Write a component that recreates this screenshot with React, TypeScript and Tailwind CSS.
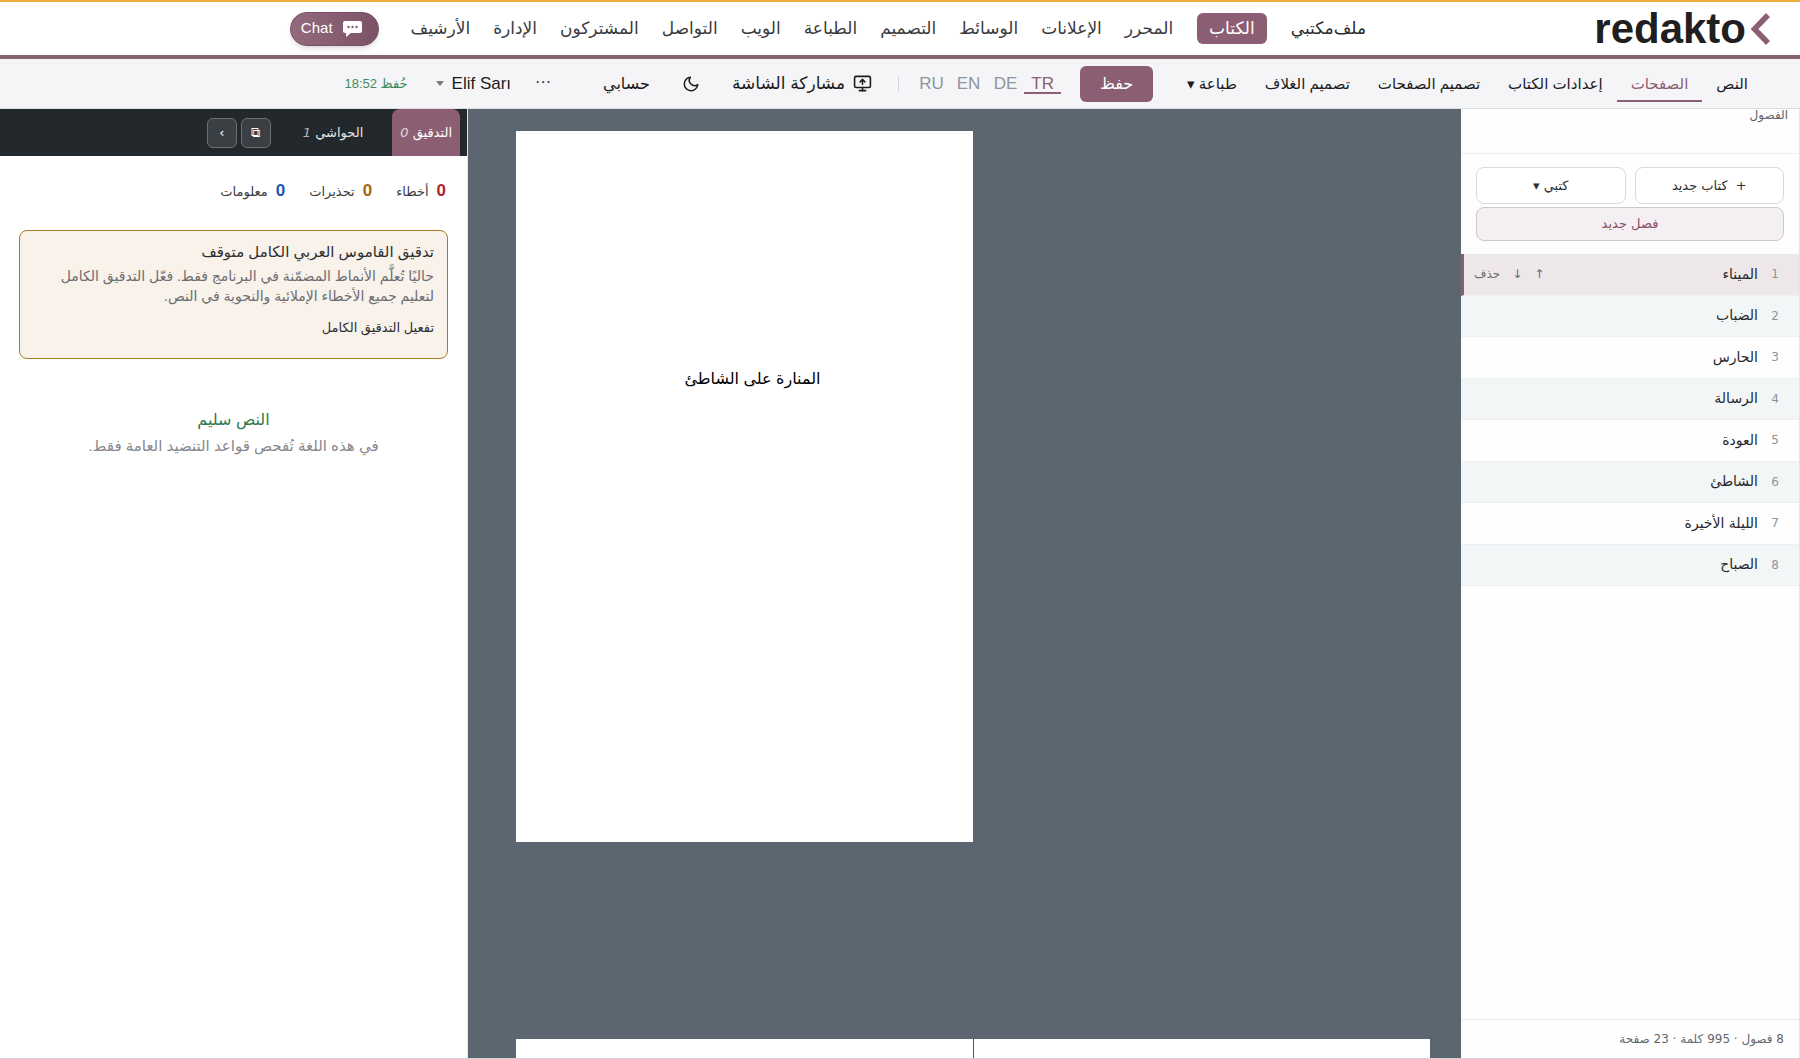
import React from 'react';
import { MonitorUp } from 'lucide-react';

const sections = ['المحرر', 'الإعلانات', 'الوسائط', 'التصميم', 'الطباعة', 'الويب', 'التواصل', 'المشتركون', 'الإدارة', 'الأرشيف'];
const bookTabs = ['النص', 'الصفحات', 'إعدادات الكتاب', 'تصميم الصفحات', 'تصميم الغلاف', 'طباعة ▾'];
const languages = ['TR', 'DE', 'EN', 'RU'];
const chapters = ['الميناء', 'الضباب', 'الحارس', 'الرسالة', 'العودة', 'الشاطئ', 'الليلة الأخيرة', 'الصباح'];

const counters = [
    { label: 'أخطاء', count: 0, color: 'text-[#b3262e]' },
    { label: 'تحذيرات', count: 0, color: 'text-[#a8660a]' },
    { label: 'معلومات', count: 0, color: 'text-[#1f56b3]' },
];

const Logo: React.FC = () => (
    <a href="#" className="flex items-center gap-1 text-[#1f1f1f]">
        <svg className="h-8 w-5" viewBox="0 0 20 32" fill="none" stroke="#8b5e73" strokeWidth="5.5">
            <path d="M18 2 4.500 16 18 30" />
        </svg>
        <span className="text-[42px] leading-12 font-bold">redakto</span>
    </a>
);

const Header: React.FC = () => (
    <header className="flex h-[59px] shrink-0 items-center border-t-2 border-b-4 border-t-[#ebaf37] border-b-[#86636f] bg-white ps-[30px]">
        <div className="w-[404px]"><Logo /></div>
        <nav className="flex items-center text-[17px] text-[#3a3a3d]">
            <a href="#" className="text-[#2b2b2e]">ملف</a>
            <a href="#" className="pe-6 text-[#2b2b2e]">مكتبي</a>
            <a href="#" className="me-6 rounded-md bg-[#8b5e73] px-3 py-[3px] text-white">الكتاب</a>
            <div className="flex gap-[23px]">
                {sections.map(name => (
                    <a key={name} href="#">{name}</a>
                ))}
            </div>
        </nav>
        <button className="ms-8 flex h-[34px] items-center gap-2.5 rounded-full border border-[#7b5065] bg-linear-to-r from-[#936a7d] to-[#7c5267] ps-4 pe-2.5 text-[15px] text-white shadow-md">
            <svg className="h-4 w-[19px]" viewBox="0 0 19 16" fill="white">
                <path d="M2 0h15a2 2 0 0 1 2 2v8a2 2 0 0 1-2 2H8l-5 4v-4H2a2 2 0 0 1-2-2V2a2 2 0 0 1 2-2z" />
                <g fill="#845a6e">
                    <circle cx="5.500" cy="6" r="1.200" />
                    <circle cx="9.500" cy="6" r="1.200" />
                    <circle cx="13.500" cy="6" r="1.200" />
                </g>
            </svg>
            Chat
        </button>
    </header>
);

const Toolbar: React.FC = () => (
    <div className="flex h-[50px] shrink-0 items-center border-b border-[#dcdfe2] bg-[#f5f5f7] ps-[38px] text-[#1b1b1e]">
        <nav className="flex items-center text-[15px] leading-6">
            {bookTabs.map(tab => (
                <a
                    key={tab}
                    href="#"
                    className={`border-b-2 px-3.5 pt-1.5 pb-1 ${tab === 'الصفحات' ? 'border-[#8b5e73] text-[#8b5e73]' : 'border-transparent'}`}
                >
                    {tab}
                </a>
            ))}
        </nav>
        <button className="ms-5 h-9 w-[73px] rounded-md bg-[#8b5e73] text-[16px] text-white">حفظ</button>
        <div className="ms-[19px] flex items-center text-[17px] text-[#8d959e]">
            {languages.map(code => (
                <button key={code} className={`w-[37px] border-y-2 border-t-transparent leading-4 ${code === 'TR' ? 'border-b-[#8b5e73] text-[#8b5e73]' : 'border-b-transparent'}`}>
                    {code}
                </button>
            ))}
        </div>
        <div className="mx-3.5 h-4 w-px bg-[#d3d5da]" />
        <button className="ms-3 flex items-center gap-2 text-[17px]">
            <MonitorUp size={19} />
            مشاركة الشاشة
        </button>
        <button className="ms-8" aria-label="الوضع الداكن">
            <svg className="h-[18px] w-[18px]" viewBox="0 0 24 24" fill="none" stroke="currentColor" strokeWidth="2" strokeLinejoin="round">
                <path d="M21 12.790A9 9 0 1 1 11.210 3 7 7 0 0 0 21 12.790z" />
            </svg>
        </button>
        <button className="ms-8 text-[16px]">حسابي</button>
        <button className="ms-[52px] pb-1 text-[16px]">···</button>
        <button className="ms-6 flex items-center gap-2 text-[17px]">
            Elif Sarı
            <svg className="h-[5px] w-2" viewBox="0 0 8 5" fill="#777"><path d="M0 0h8L4 5z" /></svg>
        </button>
        <span className="ms-7 text-[13px] text-[#3f8a5f]">حُفظ 18:52</span>
    </div>
);

const ChapterList: React.FC = () => (
    <aside className="flex w-[339px] shrink-0 flex-col border-s border-[#e3e5e8] bg-[#fefefe] font-['DejaVu_Sans',sans-serif]">
        <h2 className="h-[45px] border-b border-[#eceef0] px-[11px] text-[12px] leading-3 text-[#5f6368]">الفصول</h2>
        <div className="px-[15px] py-[13px] text-[13px]">
            <div className="grid grid-cols-2 gap-[9px]">
                <button className="flex h-[37px] items-center justify-center gap-2 rounded-lg border border-[#d9dade] bg-white text-[#2f2f33]"><span>+</span>كتاب جديد</button>
                <button className="h-[37px] rounded-lg border border-[#d9dade] bg-white text-[#2f2f33]">كتبي ▾</button>
            </div>
            <button className="mt-[3px] h-[34px] w-full rounded-lg border border-[#d0c6cc] bg-[#f4eff2] text-[#8b5068]">فصل جديد</button>
        </div>
        <ul className="grid h-[332px] auto-rows-fr">
            {chapters.map((title, i) => (
                <li
                    key={title}
                    className={`flex items-center border-b border-[#edf0f2] ps-5 ${i === 0 ? 'border-e-3 border-e-[#8b5e73] bg-[#eee7ea] pe-2.5' : i % 2 ? 'bg-[#f3f6f7]' : ''}`}
                >
                    <span className="w-[21px] text-[12px] text-[#8f9499]">{i + 1}</span>
                    <a href="#" className="grow text-[14px] text-[#26282b]">{title}</a>
                    {i === 0 && (
                        <span className="flex items-center gap-3 text-[12px] text-[#6c6a70]">
                            <button>↑</button>
                            <button>↓</button>
                            <button>حذف</button>
                        </span>
                    )}
                </li>
            ))}
        </ul>
        <footer className="mt-auto h-[39px] border-t border-[#e8eaec] px-[15px] pt-2.5 text-[12px] text-[#63676c]">8 فصول · 995 كلمة · 23 صفحة</footer>
    </aside>
);

const Canvas: React.FC = () => (
    <main className="flex grow flex-col items-end overflow-hidden bg-[#5c6670] ps-[31px] pe-12 pt-[22px]">
        <article className="h-[711px] w-1/2 shrink-0 bg-white pe-4 pt-[236px] text-center text-[16px] text-black">المنارة على الشاطئ</article>
        <div className="mt-[197px] grid h-[711px] w-full shrink-0 grid-cols-2 bg-white">
            <article className="border-e border-[#4c555e]" />
            <article />
        </div>
    </main>
);

const ProofPanel: React.FC = () => (
    <aside className="flex w-[468px] shrink-0 flex-col border-s border-[#e3e5e8] bg-white">
        <div className="flex h-[47px] shrink-0 items-center bg-[#23282c] ps-[7px] font-['DejaVu_Sans',sans-serif] text-[13px] text-[#e4e4e6]">
            <button className="h-full rounded-t-lg bg-[#8b5e73] px-2 text-white">التدقيق <em className="opacity-75">0</em></button>
            <button className="ms-[21px] px-2">الحواشي <em className="opacity-75">1</em></button>
            <button className="ms-6 h-[30px] w-[30px] rounded-md border border-[#6b7074] bg-[#3a3f43] text-white">⧉</button>
            <button className="ms-1 h-[30px] w-[30px] rounded-md border border-[#6b7074] bg-[#3a3f43] text-white">›</button>
        </div>
        <div className="flex gap-6 px-[21px] pt-[23px]">
            {counters.map(item => (
                <span key={item.label} className="flex items-baseline gap-2 text-[13px] text-[#3c3c40]">
                    <b className={`text-[17px] leading-6 ${item.color}`}>{item.count}</b>
                    {item.label}
                </span>
            ))}
        </div>
        <section className="mx-[19px] mt-[27px] h-[129px] rounded-lg border border-[#a97a22] bg-[#f8f2eb] px-[13px] pt-[11px]">
            <h3 className="text-[15px] leading-5 text-[#2f2f32]">تدقيق القاموس العربي الكامل متوقف</h3>
            <p className="mt-1 text-[14px] leading-5 text-[#6d6d72]">حاليًا تُعلَّم الأنماط المضمّنة في البرنامج فقط. فعّل التدقيق الكامل لتعليم جميع الأخطاء الإملائية والنحوية في النص.</p>
            <button className="mt-3 text-[13px] leading-5 text-[#2f2f32]">تفعيل التدقيق الكامل</button>
        </section>
        <div className="mt-[49px] text-center">
            <p className="text-[16px] leading-6 text-[#2d7a50]">النص سليم</p>
            <p className="mt-0.5 text-[15px] leading-6 text-[#85878c]">في هذه اللغة تُفحص قواعد التنضيد العامة فقط.</p>
        </div>
    </aside>
);

const App: React.FC = () => (
    <div dir="rtl" className="flex h-screen flex-col overflow-hidden border-b border-[#d0d3d6] bg-white font-['Liberation_Sans','DejaVu_Sans',sans-serif]">
        <Header />
        <Toolbar />
        <div className="flex min-h-0 grow">
            <ChapterList />
            <Canvas />
            <ProofPanel />
        </div>
    </div>
);

export default App;
